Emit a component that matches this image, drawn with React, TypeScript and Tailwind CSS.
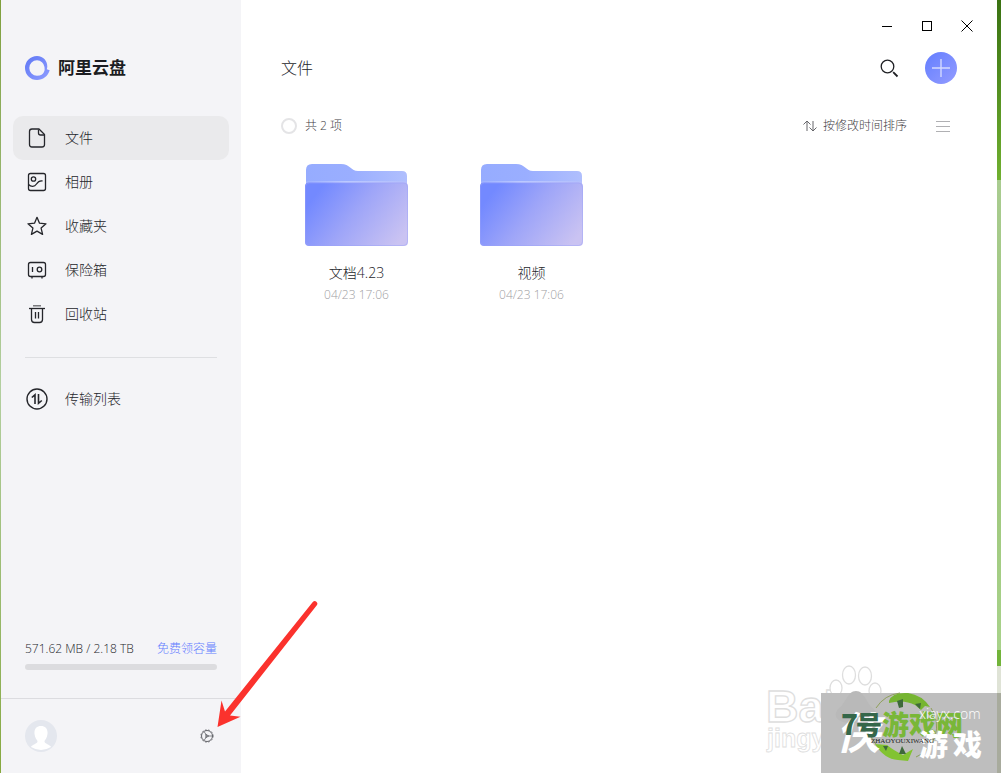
import { useState } from "react"
import type { ReactNode } from "react"

type NavItem = {
  label: string
  icon: ReactNode
}

type Folder = {
  name: string
  time: string
}

const FileIcon = () => (
  <svg width="24" height="24" viewBox="0 0 24 24" fill="none" stroke="currentColor" strokeWidth="1.3" strokeLinejoin="round">
    <path d="M7 3H14L19.5 8.5V18.5Q19.5 21 17 21H7Q4.500 21 4.500 18.500V5.500Q4.500 3 7 3Z" />
    <path d="M13.500 3.500V7Q13.500 9 15.500 9H19" />
  </svg>
)

const AlbumIcon = () => (
  <svg width="24" height="24" viewBox="0 0 24 24" fill="none" stroke="currentColor" strokeWidth="1.3">
    <rect x="3.500" y="3.500" width="17" height="17" rx="2" />
    <circle cx="8.500" cy="9" r="2.200" />
    <path d="M3.500 14.500C6 17 9.500 17 11.500 14C13.500 11 15.500 10.500 17.500 11" />
  </svg>
)

const StarIcon = () => (
  <svg width="24" height="24" viewBox="0 0 24 24" fill="none" stroke="currentColor" strokeWidth="1.3" strokeLinejoin="round">
    <path d="M12 3.300L14.500 9.200L21 9.800L16.100 14.100L17.600 20.400L12 17.100L6.400 20.400L7.900 14.100L3 9.800L9.500 9.200Z" />
  </svg>
)

const SafeIcon = () => (
  <svg width="24" height="24" viewBox="0 0 24 24" fill="none" stroke="currentColor" strokeWidth="1.3">
    <rect x="3.500" y="4.500" width="17" height="14" rx="2" />
    <path d="M7.500 9V14M7 18.500V20.500M17 18.500V20.500" />
    <circle cx="14.500" cy="11.500" r="2.300" />
  </svg>
)

const TrashIcon = () => (
  <svg width="24" height="24" viewBox="0 0 24 24" fill="none" stroke="currentColor" strokeWidth="1.3">
    <path d="M4 6.500H20" />
    <path d="M8 3.800H16" strokeOpacity="0.700" />
    <path d="M6.500 6.500V17.500Q6.500 20.500 9.500 20.500H14.500Q17.500 20.500 17.500 17.500V6.500M10.500 10V16.500M13.500 10V16.500" />
  </svg>
)

const TransferIcon = () => (
  <svg width="24" height="24" viewBox="0 0 24 24" fill="none" stroke="currentColor" strokeWidth="1.400">
    <circle cx="12" cy="12" r="10" />
    <path d="M6.800 10.500L10 7.800V17M13.500 7V16.300L16.800 13.500" strokeWidth="1.600" />
  </svg>
)

const navItems: NavItem[] = [
  { label: "文件", icon: <FileIcon /> },
  { label: "相册", icon: <AlbumIcon /> },
  { label: "收藏夹", icon: <StarIcon /> },
  { label: "保险箱", icon: <SafeIcon /> },
  { label: "回收站", icon: <TrashIcon /> },
]

const folders: Folder[] = [
  { name: "文档4.23", time: "04/23 17:06" },
  { name: "视频", time: "04/23 17:06" },
]

function NavButton({ item, active, onClick }: { item: NavItem; active: boolean; onClick: () => void }) {
  return (
    <button
      type="button"
      onClick={onClick}
      className={`flex h-11 w-full cursor-pointer items-center gap-4 rounded-[10px] px-3 text-sm text-[#25262b] ${active ? "bg-[#eaeaec]" : "hover:bg-[#eeeef0]"}`}
    >
      {item.icon}
      {item.label}
    </button>
  )
}

function Logo() {
  return (
    <div className="flex items-center gap-2 px-6">
      <svg width="25" height="24" viewBox="0 0 25 24">
        <defs>
          <linearGradient id="logo-ring" x1="0" y1="0" x2="1" y2="1">
            <stop offset="0" stopColor="#5f78f5" />
            <stop offset="1" stopColor="#8f9dff" />
          </linearGradient>
        </defs>
        <path
          d="M12 0C18.500 0 22.500 5 22.300 11L21.800 13.200L24.700 14.200C23 20 18 24 12 24A12 12 0 0 1 12 0ZM12 4.300A7.700 7.700 0 0 0 12 19.700C16 19.700 18 18.200 19 16Q20 14 19.500 11A7.700 7.700 0 0 0 12 4.300Z"
          fill="url(#logo-ring)"
          fillRule="evenodd"
        />
      </svg>
      <span className="text-[17px] font-bold leading-6 text-[#1c1d22]">阿里云盘</span>
    </div>
  )
}

function Sidebar() {
  const [active, setActive] = useState("文件")

  return (
    <aside className="flex w-60 shrink-0 flex-col bg-[#f4f4f7] pt-14">
      <Logo />

      <nav className="mt-9 px-3">
        {navItems.map((item) => (
          <NavButton key={item.label} item={item} active={active === item.label} onClick={() => setActive(item.label)} />
        ))}
        <hr className="mx-3 mt-[21px] mb-[19px] border-[#dedfe2]" />
        <NavButton
          item={{ label: "传输列表", icon: <TransferIcon /> }}
          active={active === "传输列表"}
          onClick={() => setActive("传输列表")}
        />
      </nav>

      <div className="mt-auto px-6 pb-7">
        <div className="flex items-center justify-between text-xs leading-5 text-[#25262b]">
          <span>571.62 MB / 2.18 TB</span>
          <a href="#capacity" className="text-[#637dff]">免费领容量</a>
        </div>
        <div className="mt-[5px] h-1.5 rounded-full bg-[#dcdcdf]" />
      </div>

      <div className="flex h-[75px] items-center justify-between border-t border-[#dcdce0] px-6">
        <button type="button" aria-label="账户" className="cursor-pointer">
          <svg width="32" height="32" viewBox="0 0 32 32">
            <circle cx="16" cy="16" r="16" fill="#e4e7ee" />
            <path d="M16 6C20.500 6 23 9 22.500 14C22 18 20 20 19.500 21C19 24 25 24.500 26 27Q16 33 6 27C7 24.500 13 24 12.500 21C12 20 10 18 9.500 14C9 9 11.500 6 16 6Z" fill="#fff" />
          </svg>
        </button>
        <button type="button" aria-label="设置" className="flex size-5 cursor-pointer items-center justify-center text-[#55565b]">
          <svg width="14" height="14" viewBox="0 0 14 14" fill="none" stroke="currentColor">
            <circle cx="7" cy="7" r="5.500" strokeWidth="0.900" />
            <circle cx="7" cy="7" r="6.200" strokeDasharray="1.600 1.700" strokeWidth="0.700" />
            <path d="M7 7H12.500M7 7L4 2.500M7 7L4 11.500M5.800 5.300L8.800 7L5.800 8.700Z" strokeWidth="0.700" />
          </svg>
        </button>
      </div>
    </aside>
  )
}

function WindowControls() {
  return (
    <div className="flex h-[52px] justify-end pr-2.5 text-black">
      <button type="button" aria-label="最小化" className="flex w-10 items-center justify-center">
        <svg width="12" height="12" viewBox="0 0 12 12" stroke="currentColor"><path d="M1 6.500H11" /></svg>
      </button>
      <button type="button" aria-label="最大化" className="flex w-10 items-center justify-center">
        <svg width="12" height="12" viewBox="0 0 12 12" fill="none" stroke="currentColor"><rect x="1.500" y="1.500" width="9" height="9" /></svg>
      </button>
      <button type="button" aria-label="关闭" className="flex w-10 items-center justify-center">
        <svg width="12" height="12" viewBox="0 0 12 12" stroke="currentColor"><path d="M0.500 0.500L11.500 11.500M11.500 0.500L0.500 11.500" /></svg>
      </button>
    </div>
  )
}

function FolderIcon() {
  return (
    <svg width="104" height="84" viewBox="0 0 104 84">
      <defs>
        <linearGradient id="folder-back" x1="0" y1="0" x2="1" y2="0">
          <stop offset="0" stopColor="#96acff" />
          <stop offset="0.450" stopColor="#9aaeff" />
          <stop offset="1" stopColor="#b0bffd" />
        </linearGradient>
        <linearGradient id="folder-front" x1="0.050" y1="0.300" x2="1" y2="0.750">
          <stop offset="0" stopColor="#7389ff" />
          <stop offset="0.450" stopColor="#9ea5f8" />
          <stop offset="1" stopColor="#cac3f2" />
        </linearGradient>
        <linearGradient id="folder-edge" x1="0" y1="0" x2="1" y2="0">
          <stop offset="0" stopColor="#a5b6ff" />
          <stop offset="0.400" stopColor="#dfe5ff" />
          <stop offset="1" stopColor="#b5bffc" />
        </linearGradient>
      </defs>
      <path d="M1 30V6Q1 0 7 0H36C45 0 46 7 53 7H97Q102 7 102 12V30Z" fill="url(#folder-back)" />
      <path d="M1 17.500H102V22H1Z" fill="url(#folder-edge)" />
      <rect x="0" y="18.500" width="103" height="63.500" rx="4" fill="url(#folder-front)" />
      <rect x="0.500" y="19" width="102" height="62.500" rx="4" fill="none" stroke="#98a2f8" strokeOpacity="0.450" />
    </svg>
  )
}

function FolderCard({ folder }: { folder: Folder }) {
  return (
    <button type="button" className="flex cursor-pointer flex-col items-center">
      <FolderIcon />
      <span className="mt-[15px] text-sm leading-5 text-[#25262b]">{folder.name}</span>
      <span className="mt-1 text-xs leading-4 text-[#a0a0a3]">{folder.time}</span>
    </button>
  )
}

function FilesPanel() {
  return (
    <main className="flex min-w-0 flex-1 flex-col bg-white">
      <WindowControls />

      <header className="flex h-8 items-center justify-between px-10">
        <h1 className="text-base font-light text-[#25262b]">文件</h1>
        <div className="flex items-center gap-6">
          <button type="button" aria-label="搜索" className="cursor-pointer text-[#1f2024]">
            <svg width="24" height="24" viewBox="0 0 24 24" fill="none" stroke="currentColor" strokeWidth="1.300">
              <circle cx="10.500" cy="10.500" r="6.300" />
              <path d="M16.200 16.200L20.500 20.500" strokeWidth="1.800" />
            </svg>
          </button>
          <button type="button" aria-label="新建" className="flex size-8 cursor-pointer items-center justify-center rounded-full bg-linear-to-br from-[#637dff] to-[#949cff]">
            <svg width="20" height="20" viewBox="0 0 20 20" stroke="#d3d9ff" strokeWidth="1.400"><path d="M1 10H19M10 1V19" /></svg>
          </button>
        </div>
      </header>

      <div className="mt-8 flex h-5 items-center justify-between px-10 text-xs text-[#3f4045]">
        <label className="flex items-center gap-2">
          <input type="checkbox" className="size-4 appearance-none rounded-full border-2 border-[#e4e4e6] bg-white checked:bg-[#637dff]" />
          共 2 项
        </label>
        <div className="flex items-center gap-[22px]">
          <button type="button" className="flex cursor-pointer items-center gap-1.5">
            <svg width="14" height="12" viewBox="0 0 14 12" fill="none" stroke="#66676b">
              <path d="M0.500 4.500L4 1L7.500 4.500M4 1V11M6.500 7.500L10 11L13.500 7.500M10 11V1" />
            </svg>
            按修改时间排序
          </button>
          <button type="button" aria-label="列表视图" className="flex w-7 cursor-pointer justify-center text-[#b0b0b3]">
            <svg width="14" height="11" viewBox="0 0 14 11" stroke="currentColor"><path d="M0 0.500H14M0 5.500H14M0 10.500H14" /></svg>
          </button>
        </div>
      </div>

      <section className="mt-7 grid grid-cols-[repeat(auto-fill,175px)] gap-y-6 px-7">
        {folders.map((folder) => (
          <FolderCard key={folder.name} folder={folder} />
        ))}
      </section>
    </main>
  )
}

function PointerArrow() {
  return (
    <svg className="pointer-events-none absolute bottom-[43px] left-[210px]" width="110" height="135" viewBox="210 595 110 135" fill="#fb322d">
      <path d="M217.500 727L221.500 700.500L225 711.500L313 601.800A2.600 2.600 0 0 1 317 605L230 715.500L240.500 716.700Z" />
    </svg>
  )
}

function Watermarks() {
  return (
    <svg className="pointer-events-none absolute right-0 bottom-0" width="240" height="120" viewBox="761 653 240 120">
      <g fill="#fff" stroke="#dedede" strokeWidth="1.300" fontFamily="'Liberation Sans', sans-serif" fontWeight="bold">
        <text x="766" y="722" fontSize="45">Bai</text>
        <text x="767" y="747" fontSize="25" strokeWidth="0.800">jingyan</text>
        <ellipse cx="849" cy="675" rx="6.500" ry="9" />
        <ellipse cx="865" cy="676" rx="6.500" ry="9" />
        <ellipse cx="836" cy="688" rx="6" ry="8" />
        <ellipse cx="875" cy="691" rx="6" ry="8" />
      </g>

      <rect x="821" y="693" width="176" height="80" fill="#bebebe" />
      <rect x="997" y="693" width="4" height="80" fill="#a8ab9d" />
      <path d="M856 691C865 691 866 704 874 709C880 717 874 724 856 723C838 724 832 717 838 709C846 704 847 691 856 691Z" fill="#b9b9b9" />

      <path d="M876 708A33 33 0 0 1 900 693M876 744Q870 738 869 730M931 708A33 33 0 0 1 916 757" fill="none" stroke="#8fa05a" />
      <path d="M889 701Q892 692 908 693Q922 695 930 707L925 706L921 710L915 705Q904 699 889 703Z" fill="#76b532" />
      <path d="M897 701L903 699V707L899 708ZM915 704L921 703L920 709Z" fill="#3e6a3a" />
      <path d="M875 744Q884 759 898 760L908 761L913 749L903 755Q893 750 887 745Z" fill="#82c331" />
      <path d="M899 754L902 746L906 754ZM883 746L888 746L886 751Z" fill="#3e6a3a" />

      <g fontFamily="'Noto Sans CJK SC', sans-serif" fontWeight="900">
        <text x="836" y="749" fontSize="44" fontWeight="700" fill="#fff" fontStyle="italic">侠</text>
        <text x="841" y="735" fontSize="28" fill="#35674a">7</text>
        <text x="856" y="735" fontSize="26" fill="#35674a">号</text>
        <text x="882" y="735" fontSize="27" fill="#79b738">游戏网</text>
        <text x="919" y="756" fontSize="29" fill="#fff">游</text>
        <text x="953" y="756" fontSize="29" fill="#fff">戏</text>
      </g>
      <text x="919" y="719" fontSize="14" fill="#fff" fontFamily="'Open Sans', sans-serif">xiayx.com</text>
      <text x="871" y="743" fontSize="7" fill="#222" fontFamily="'Liberation Serif', serif">ZHAOYOUXIWANG</text>
    </svg>
  )
}

export default function App() {
  return (
    <div className="relative flex min-h-screen overflow-hidden bg-white font-['Open_Sans','Noto_Sans_CJK_SC',sans-serif] font-light">
      <div className="w-px shrink-0 bg-linear-to-b from-[#7f9f3c] via-[#b3cfa0] to-[#86a83e]" />
      <Sidebar />
      <FilesPanel />
      <div className="flex w-1 shrink-0 flex-col">
        <div className="h-[180px] bg-linear-to-b from-[#3a7212] to-[#70b030]" />
        <div className="h-[470px] bg-linear-to-b from-[#a9cc90] via-[#9cc579] to-[#a8d28a]" />
        <div className="h-4 bg-[#72b43a]" />
        <div className="flex-1 bg-[#dfe3d6]" />
      </div>
      <PointerArrow />
      <Watermarks />
    </div>
  )
}
